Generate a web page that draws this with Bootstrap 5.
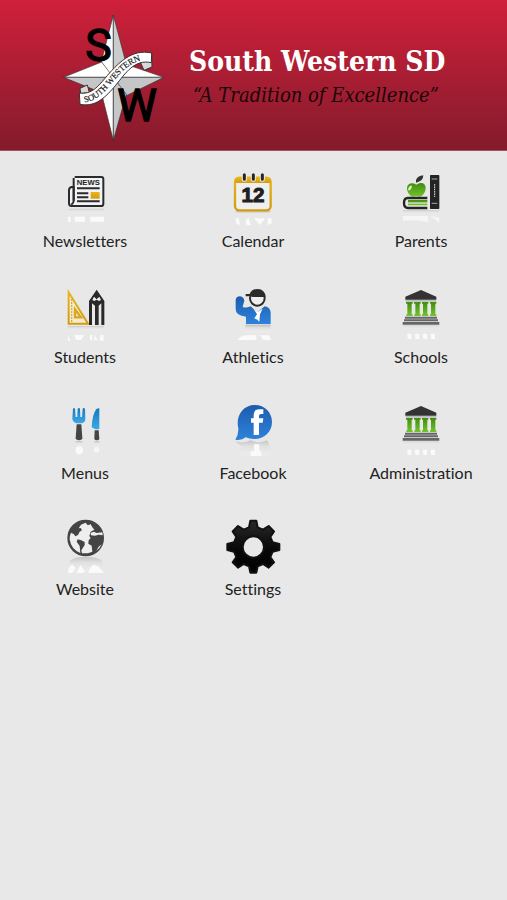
<!DOCTYPE html>
<html lang="en">
<head>
<meta charset="utf-8">
<meta name="viewport" content="width=device-width, initial-scale=1">
<title>South Western SD</title>
<link href="https://cdn.jsdelivr.net/npm/bootstrap@5.3.0/dist/css/bootstrap.min.css" rel="stylesheet">
<style>
body{background:#e8e8e8;font-family:Lato,"Liberation Sans",sans-serif;color:#222}
.masthead{background:linear-gradient(#d0203b,#831b2b);min-height:151px;padding:5px 0 0 50px;border-bottom:1px solid #9c5560}
.crest{width:130px;height:145px;flex:none}
.brand-copy{font-family:"DejaVu Serif Condensed","DejaVu Serif",serif;padding:40px 0 0 9px;white-space:nowrap}
.brand-title{font-size:28px;line-height:34px;font-weight:700;font-family:"DejaVu Serif Condensed","DejaVu Serif",serif}
.brand-motto{font-size:20px;line-height:32px;font-style:italic;color:#1c0509;padding-left:4px}
.tiles{padding:14px 2px 0 1px}
.tile{height:116px;color:#222;font-size:16px;line-height:24px;font-variant-ligatures:none}
.tile svg{width:60px;height:62px;margin-bottom:2px}
</style>
<script src="https://cdn.jsdelivr.net/npm/bootstrap@5.3.0/dist/js/bootstrap.bundle.min.js" defer></script>
</head>
<body>
<header class="masthead d-flex align-items-start">
<svg class="crest" viewBox="0 0 390 435" role="img" aria-label="South Western crest">
<g stroke="#333" stroke-width="2" stroke-linejoin="round">
<path fill="#fff" d="M155 170 190 217 150 200ZM225 272 190 217 240 240Z"/>
<path fill="#fff" d="M190 30 152 178 190 217Z"/><path fill="#c9cbcc" d="M190 30 229 178 190 217Z"/>
<path fill="#fff" d="M40 217 155 171 190 217Z"/><path fill="#c4c6c7" d="M40 217 152 262 190 217Z"/>
<path fill="#fff" d="M342 217 229 178 190 217Z"/><path fill="#c4c6c7" d="M342 217 229 272 190 217Z"/>
<path fill="#fff" d="M190 406 152 255 190 217Z"/><path fill="#c4c6c7" d="M190 406 229 268 190 217Z"/>
</g>
<path fill="#d8d8d8" stroke="#333" stroke-width="3" d="M90 250 112 240 118 262 92 266ZM305 145 306 186 282 196 272 174Z"/>
<path fill="#fff" stroke="#333" stroke-width="3" stroke-linejoin="round" d="M88 264C125 270 145 243 165 220C202 176 245 130 305 144L304 173C253 162 227 204 197 241C166 277 138 307 90 298Z"/>
<defs><path id="ribbon" d="M103 292C142 287 163 260 187 233C220 194 245 163 310 162"/></defs>
<text font-family="Liberation Serif" font-size="26" fill="#111" stroke="#111" stroke-width=".5"><textPath href="#ribbon">SOUTH WESTERN</textPath></text>
<g fill="#000" font-family="'Liberation Sans Narrow', Roboto, sans-serif" stroke="#000">
<text x="106" y="167" font-size="134" stroke-width="4">S</text>
<text x="202" y="347" font-size="134" stroke-width="4">W</text></g>
</svg>
<div class="brand-copy"><h1 class="brand-title text-white mb-0">South Western SD</h1><p class="brand-motto mb-0">“A Tradition of Excellence”</p></div>
</header>
<svg width="0" height="0" class="position-absolute" aria-hidden="true"><defs>
<linearGradient id="shade" x2="0" y2="1"><stop stop-color="#bbb"/><stop offset=".35" stop-color="#dedede"/><stop offset="1" stop-color="#f2f2f2" stop-opacity=".3"/></linearGradient>
<linearGradient id="gold" x2="0" y2="1"><stop stop-color="#e8b51d"/><stop offset="1" stop-color="#d39b10"/></linearGradient>
<linearGradient id="blue" x2="0" y2="1"><stop stop-color="#1c5dac"/><stop offset="1" stop-color="#2e82dc"/></linearGradient>
<linearGradient id="sky" x2="0" y2="1"><stop stop-color="#1679bd"/><stop offset="1" stop-color="#3ba9e8"/></linearGradient>
<linearGradient id="leaf" x2="0" y2="1"><stop stop-color="#3f8c10"/><stop offset="1" stop-color="#75c22e"/></linearGradient>
<linearGradient id="coal" x2="0" y2="1"><stop stop-color="#292929"/><stop offset=".55" stop-color="#080808"/><stop offset="1" stop-color="#000"/></linearGradient>
<symbol id="bank" viewBox="51 3 180 186">
<path fill="#333" d="M141 30 187 50V59H94V50Z"/><path fill="#bbb" d="M95 60H187V65H95Z"/>
<path fill="url(#leaf)" d="M96 66H116V71H113V103H116V108H97V103H100V71H96ZM120 66H140V71H137V103H140V108H121V103H124V71H120ZM144 66H163V71H160V103H163V108H144V103H147V71H144ZM168 66H187V71H184V103H187V108H168V103H171V71H168Z"/>
<path fill="#666" d="M93 110H189V116H93ZM90 118H192V124H90ZM86 126H196V134H86Z"/>
<path fill="url(#shade)" opacity=".45" d="M88 136H195V148H88Z"/><path fill="#fafafa" d="M99 161H112V177H102ZM123 161H136V177H124ZM146 161H159V177H148ZM170 161H183V177H171Z"/>
</symbol></defs></svg>
<main class="tiles container-fluid">
<nav class="row g-0" aria-label="Sections">
<a href="#newsletters" class="col-4 tile d-flex flex-column align-items-center text-decoration-none"><svg viewBox="45 0 180 186" aria-hidden="true">
<path fill="url(#shade)" opacity=".6" d="M86 131H192V146H86Z"/><path fill="#fafafa" d="M84 155H92V171H84ZM104 155H135V170H104ZM151 155H192V170H151Z"/>
<path fill="#f3f3f3" stroke="#2b2b2f" stroke-width="6" stroke-linejoin="round" d="M104 36H184Q190 36 190 43V116Q190 123 183 123H94Q87 123 87 115V76Q87 68 95 66H101V108Q101 114 94 119"/><path stroke="#2b2b2f" stroke-width="6" d="M101 39V107"/>
<text x="145" y="60" text-anchor="middle" font-family="Liberation Sans" font-weight="700" font-size="23" fill="#222">NEWS</text>
<path stroke="#2b2b2f" stroke-width="6" d="M111 70H179M111 85H145M111 97H145M111 109H179"/><path fill="url(#gold)" d="M152 81H179V101H152Z"/></svg>Newsletters</a>
<a href="#calendar" class="col-4 tile d-flex flex-column align-items-center text-decoration-none"><svg viewBox="54 0 180 186" aria-hidden="true">
<path fill="url(#shade)" d="M91 139H198L188 150H101Z"/><path fill="#fafafa" d="M91 160H101L106 180 94 176ZM122 166 130 158 138 181H124ZM146 160H181L164 180 157 170ZM188 160H200V175L188 181Z"/>
<rect x="90" y="38" width="107" height="98" rx="13" fill="#efefef" stroke="url(#gold)" stroke-width="7"/><path fill="url(#gold)" d="M91 38H196V54H91Z"/>
<g stroke-linecap="round"><path stroke="#eee" stroke-width="15" d="M118 30V43M145 30V43M172 30V43"/><path stroke="#252525" stroke-width="9" d="M118 29V43M145 29V43M172 29V43"/></g>
<text x="144" y="111" text-anchor="middle" font-family="Liberation Sans" font-weight="700" font-size="62" fill="#202020" stroke="#202020" stroke-width="3">12</text></svg>Calendar</a>
<a href="#parents" class="col-4 tile d-flex flex-column align-items-center text-decoration-none"><svg viewBox="51 0 180 186" aria-hidden="true">
<path fill="url(#shade)" opacity=".6" d="M87 135H196V150H87Z"/><path fill="#f5f5f5" d="M86 153H162V172Q120 162 88 168ZM168 152 196 175V158Z"/>
<path fill="#333" d="M126 53Q124 33 148 31Q148 49 126 53Z"/><path fill="url(#leaf)" d="M127 59C142 48 156 55 155 70C154 85 145 95 136 95L127 93 117 95C107 94 98 79 99 68C100 55 115 51 127 59Z"/><ellipse cx="108" cy="69" rx="4" ry="8" fill="#dcf2bc" transform="rotate(35 108 69)"/>
<path fill="none" stroke="#252525" stroke-width="7" d="M160 99H101Q90 99 90 114Q90 129 102 129H160"/><path fill="url(#leaf)" d="M102 105H160V111H102ZM102 116H160V121H102Z"/><path stroke="#99c66d" stroke-width="3" d="M102 113H160"/>
<rect x="168" y="30" width="28" height="102" rx="2" fill="#242424"/><path stroke="#aaa" stroke-width="3" d="M173 42H190M173 115H190"/><path stroke="#ddd" stroke-width="3" stroke-dasharray="5 2" d="M182 57V96"/></svg>Parents</a>
<a href="#students" class="col-4 tile d-flex flex-column align-items-center text-decoration-none"><svg viewBox="45 3 180 186" aria-hidden="true">
<path fill="url(#shade)" opacity=".7" d="M84 138H192V152H84Z"/><path fill="#fafafa" d="M84 164 91 182H84ZM103 165H133L123 180H108ZM150 165H157V181H150ZM163 165 174 181H163ZM180 165H191V182H180Z"/>
<path fill="#f4ecd2" stroke="url(#gold)" stroke-width="6" d="M86 37V131H144Z"/><path fill="#e8e8e8" stroke="#d9a719" stroke-width="7" d="M105 88V112H123Z"/><path stroke="#c5961c" stroke-width="4" stroke-dasharray="4 5" d="M95 58V125"/>
<path fill="#292929" d="M170 29 193 63V135H184V70L176 77V135H165V77L156 70V135H147V63Z"/><path fill="#eee" d="M162 50 170 58 178 50 183 60 177 63 170 59 163 63 157 60Z"/></svg>Students</a>
<a href="#athletics" class="col-4 tile d-flex flex-column align-items-center text-decoration-none"><svg viewBox="54 3 180 186" aria-hidden="true">
<path fill="url(#shade)" d="M121 134H197V158H121Z"/><path fill="#fafafa" d="M97 180Q107 166 126 166H154V180ZM166 166H193L198 180H174Z"/>
<circle cx="157" cy="55" r="22" fill="#eee" stroke="#2a2a2a" stroke-width="6"/><path fill="#2a2a2a" d="M122 42H134Q140 27 158 27Q180 28 182 51H143L137 49H122Z"/>
<path fill="url(#blue)" d="M92 60Q93 49 105 49Q117 51 118 62L113 80Q120 86 137 79L157 97 179 79Q197 82 197 99V132H123V110Q92 108 92 88Z"/><path fill="#fff" d="M146 87 158 96 173 86 165 103 163 125 157 119 148 115 156 103Z"/></svg>Athletics</a>
<a href="#schools" class="col-4 tile d-flex flex-column align-items-center text-decoration-none"><svg aria-hidden="true"><use href="#bank"/></svg>Schools</a>
<a href="#menus" class="col-4 tile d-flex flex-column align-items-center text-decoration-none"><svg viewBox="45 3 180 186" aria-hidden="true">
<path fill="url(#shade)" d="M107 135H127V149H107ZM163 135H178V149H163Z"/><ellipse cx="118" cy="163" rx="11" ry="12" fill="#fafafa"/><ellipse cx="170" cy="161" rx="8" ry="9" fill="#f6f6f6"/>
<path fill="url(#sky)" d="M99 38Q102 34 105 38L107 63H112L113 38Q117 34 120 38L121 63H126L128 38Q131 34 135 38L136 68Q136 79 125 82H109Q97 78 97 67Z"/><path fill="#444" d="M110 85H124L127 127Q126 133 117 133Q108 133 107 127Z"/>
<path fill="url(#sky)" d="M178 37V98Q172 102 163 98L155 94Q157 54 169 40Q173 36 178 37Z"/><path fill="#444" d="M164 103H176L178 129Q176 133 171 133Q165 133 163 129Z"/></svg>Menus</a>
<a href="#facebook" class="col-4 tile d-flex flex-column align-items-center text-decoration-none"><svg viewBox="54 3 180 186" aria-hidden="true">
<path fill="url(#shade)" opacity=".8" d="M91 136Q117 144 137 133Q165 144 186 133Q200 150 199 180H99Q103 165 112 154Z"/><path fill="#fafafa" d="M147 145H163V166H169V180H137V166H147Z"/>
<path fill="url(#blue)" d="M91 131Q101 115 100 97C91 60 114 27 149 27C180 27 201 50 201 78C201 109 176 130 147 129Q133 129 122 124Q110 134 91 131Z"/>
<path fill="#fff" d="M146 117V80H138V67H146V57Q146 40 163 40H175V54H168Q162 54 162 60V67H175L173 80H162V117Z"/></svg>Facebook</a>
<a href="#administration" class="col-4 tile d-flex flex-column align-items-center text-decoration-none"><svg aria-hidden="true"><use href="#bank"/></svg>Administration</a>
<a href="#website" class="col-4 tile d-flex flex-column align-items-center text-decoration-none"><svg viewBox="45 9 180 186" aria-hidden="true">
<path fill="url(#shade)" opacity=".8" d="M90 151Q110 139 137 141Q164 139 186 151L192 188H84Z"/><path fill="#fafafa" d="M84 189Q84 171 97 163L106 174 98 189ZM109 189 122 165 134 183 131 189ZM145 189Q148 172 160 164L176 169 191 189Z"/>
<circle cx="137" cy="84" r="53" fill="#444" stroke="#444" stroke-width="4"/>
<path fill="#eee" d="M93 68 101 72 106 79 114 75 119 65 126 61 122 54 116 55 123 44 137 38 143 46 152 43 157 52 163 59 152 65 148 78 152 84 146 91 145 101 155 107 157 125 144 130H126L124 121 134 105 134 96 124 91 113 88 110 95 119 108 121 129Q93 118 89 88Q89 76 93 68Z"/>
<path fill="#eee" d="M152 69 161 65 170 69 187 67 188 76 176 74 165 77 153 76ZM169 122Q180 115 185 103L176 110Z"/></svg>Website</a>
<a href="#settings" class="col-4 tile d-flex flex-column align-items-center text-decoration-none"><svg viewBox="54 9 180 186" aria-hidden="true">
<path fill="url(#coal)" fill-rule="evenodd" stroke="#111" stroke-width="6" stroke-linejoin="round" d="M136 32H154L158 52 174 59 191 48 207 64 196 81 203 97 223 102V120L203 125 196 141 207 157 191 173 174 162 158 169 154 188H136L132 169 116 162 99 173 83 157 94 141 87 125 67 120V102L87 97 94 81 83 64 99 48 116 59 132 52ZM145 79A32 32 0 1 0 145 143A32 32 0 1 0 145 79Z"/></svg>Settings</a>
</nav>
</main>
</body>
</html>
